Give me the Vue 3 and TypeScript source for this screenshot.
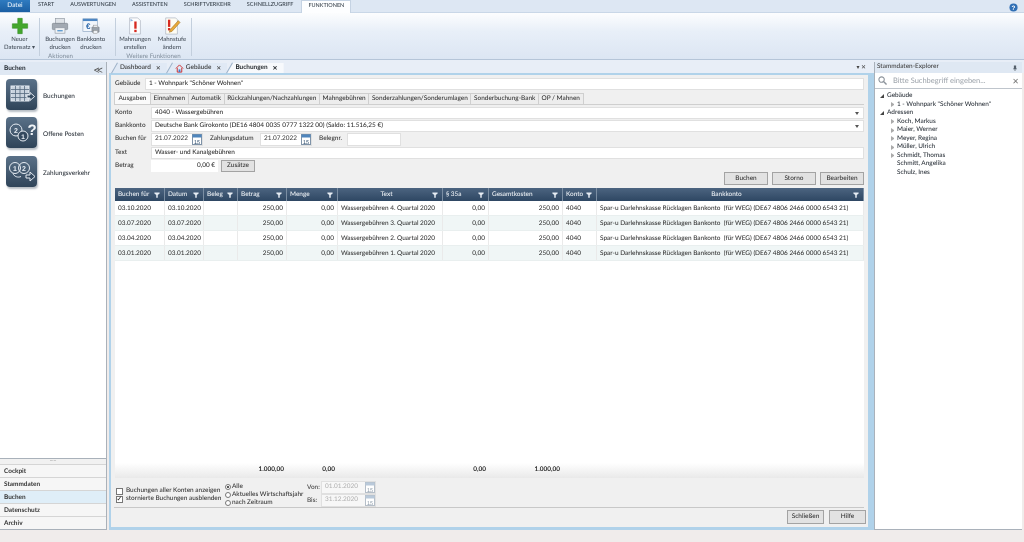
<script setup lang="ts">
const ribbonTabs = ['START', 'AUSWERTUNGEN', 'ASSISTENTEN', 'SCHRIFTVERKEHR', 'SCHNELLZUGRIFF']
const formTabs = ['Ausgaben', 'Einnahmen', 'Automatik', 'Rückzahlungen/Nachzahlungen', 'Mahngebühren', 'Sonderzahlungen/Sonderumlagen', 'Sonderbuchung-Bank', 'OP / Mahnen']
const columns = [
  { t: 'Buchen für', c: '' }, { t: 'Datum', c: '' }, { t: 'Beleg', c: '' }, { t: 'Betrag', c: '' }, { t: 'Menge', c: '' },
  { t: 'Text', c: 'center' }, { t: '§ 35a', c: '' }, { t: 'Gesamtkosten', c: '' }, { t: 'Konto', c: '' }, { t: 'Bankkonto', c: 'center' },
]
const bank = 'Spar-u Darlehnskasse Rücklagen Bankonto  (für WEG) (DE67 4806 2466 0000 6543 21)'
const rows = [
  ['03.10.2020', '4.'], ['03.07.2020', '3.'], ['03.04.2020', '2.'], ['03.01.2020', '1.'],
]
const nav = ['Cockpit', 'Stammdaten', 'Buchen', 'Datenschutz', 'Archiv']
const addresses = [
  { n: 'Koch, Markus', a: true }, { n: 'Maier, Werner', a: true }, { n: 'Meyer, Regina', a: true },
  { n: 'Müller, Ulrich', a: true }, { n: 'Schmidt, Thomas', a: true }, { n: 'Schmitt, Angelika', a: false }, { n: 'Schulz, Ines', a: false },
]
</script>

<template>
  <div class="app">
    <div class="tabbar">
      <div class="file">Datei</div>
      <div class="rtabs">
        <span v-for="t in ribbonTabs" :key="t" class="rtab">{{ t }}</span>
        <span class="rtab active">FUNKTIONEN</span>
      </div>
      <svg class="help" viewBox="0 0 10 10" width="9" height="9"><circle cx="5" cy="5" r="4.5" fill="#2f6fb5"/><text x="5" y="7.6" text-anchor="middle" font-size="7" font-weight="700" fill="#fff" font-family="Liberation Sans">?</text></svg>
    </div>

    <div class="ribbon">
      <div class="rgroup first">
        <div class="rbtn w33">
          <svg viewBox="0 0 20 20" width="18" height="18"><path d="M7.500 1.500h5v6h6v5h-6v6h-5v-6h-6v-5h6z" fill="#43a72d" stroke="#2f8a1e" stroke-width=".6"/></svg>
          <span>Neuer<br>Datensatz ▾</span>
        </div>
      </div>
      <div class="rsep"></div>
      <div class="rgroup g69">
        <div class="ritems ri1">
          <div class="rbtn w30">
            <svg viewBox="0 0 20 20" width="18" height="18"><rect x="5" y="1.500" width="10" height="6" fill="#dfe3e8" stroke="#8e96a0" stroke-width=".7"/><rect x="1.500" y="7" width="17" height="7" rx="1" fill="#a2a9b2" stroke="#6f7780" stroke-width=".6"/><rect x="4.500" y="12" width="11" height="6" fill="#eef1f4" stroke="#8e96a0" stroke-width=".7"/><rect x="7" y="14.500" width="6" height="1.500" fill="#5b9ad0"/></svg>
            <span>Buchungen<br>drucken</span>
          </div>
          <div class="rbtn w30">
            <svg viewBox="0 0 20 20" width="18" height="18"><rect x="1" y="2" width="16" height="14" fill="#f2f6fb" stroke="#8aa3bf" stroke-width=".7"/><rect x="1" y="2" width="16" height="2.500" fill="#4d86c3"/><text x="7" y="13" text-anchor="middle" font-size="9" font-weight="700" fill="#2a66aa" font-family="Liberation Sans">€</text><rect x="11" y="11" width="8" height="6" rx=".6" fill="#9aa2ab" stroke="#666e77" stroke-width=".5"/><rect x="12.500" y="9" width="5" height="2.500" fill="#e8ebee" stroke="#777" stroke-width=".4"/><rect x="12.500" y="15" width="5" height="3.500" fill="#eef1f4" stroke="#777" stroke-width=".4"/></svg>
            <span>Bankkonto<br>drucken</span>
          </div>
        </div>
        <div class="rlabel left-label">Aktionen</div>
      </div>
      <div class="rsep"></div>
      <div class="rgroup g69">
        <div class="ritems ri2">
          <div class="rbtn w32">
            <svg viewBox="0 0 20 20" width="18" height="18"><path d="M4 1h9l3 3v15H4z" fill="#fdfdfe" stroke="#a5aeba" stroke-width=".7"/><path d="M5 2l3 2-3 1z" fill="#8ab4de"/><rect x="9.200" y="5" width="2.600" height="8" fill="#d62a20"/><rect x="9.200" y="14.200" width="2.600" height="2.600" fill="#d62a20"/></svg>
            <span>Mahnungen<br>erstellen</span>
          </div>
          <div class="rbtn w32">
            <svg viewBox="0 0 20 20" width="18" height="18"><path d="M3 1h11l2 2v16H3z" fill="#fdfcf4" stroke="#a5aeba" stroke-width=".7"/><rect x="5.500" y="3" width="2.600" height="8" fill="#d62a20"/><rect x="5.500" y="12.300" width="2.600" height="2.600" fill="#d62a20"/><path d="M17 4l2 2-9 10-3 1 1-3z" fill="#e9a93a" stroke="#8a6420" stroke-width=".5"/></svg>
            <span>Mahnstufe<br>ändern</span>
          </div>
        </div>
        <div class="rlabel">Weitere Funktionen</div>
      </div>
      <div class="rsep"></div>
    </div>

    <div class="body">
      <aside class="left">
        <div class="lhead"><b>Buchen</b><span class="chev">≪</span></div>
        <div class="llist">
          <div class="litem">
            <div class="bigicon"><svg viewBox="0 0 30 30" width="30" height="30" fill="none" stroke="#dfe7f0" stroke-width="1"><rect x="4" y="7" width="18" height="15" fill="#c9d3de" stroke="#e6ecf3"/><path d="M4 10.500h18M4 14.500h18M4 18.500h18M8.500 7v15M13 7v15M17.500 7v15" stroke="#55697f" stroke-width=".8"/><path d="M20 16h3v-2.500l4.500 4-4.500 4V19h-3z" fill="#34495f" stroke="#e6ecf3"/></svg></div>
            <span>Buchungen</span>
          </div>
          <div class="litem">
            <div class="bigicon"><svg viewBox="0 0 30 30" width="30" height="30" fill="none" stroke="#e6ecf3" stroke-width="1"><circle cx="9" cy="12" r="6"/><circle cx="16" cy="18" r="5" fill="#34495f"/><text x="9" y="14.500" text-anchor="middle" font-size="7" font-weight="700" fill="#e6ecf3" stroke="none" font-family="Liberation Sans">2</text><text x="16" y="20.500" text-anchor="middle" font-size="6.500" font-weight="700" fill="#e6ecf3" stroke="none" font-family="Liberation Sans">1</text><text x="25" y="17" text-anchor="middle" font-size="15" font-weight="700" fill="#f0f4f8" stroke="none" font-family="Liberation Sans">?</text></svg></div>
            <span>Offene Posten</span>
          </div>
          <div class="litem">
            <div class="bigicon"><svg viewBox="0 0 30 30" width="30" height="30" fill="none" stroke="#e6ecf3" stroke-width="1"><circle cx="8" cy="12" r="5.500"/><circle cx="17" cy="12" r="5.500"/><text x="8" y="14.500" text-anchor="middle" font-size="7" font-weight="700" fill="#e6ecf3" stroke="none" font-family="Liberation Sans">1</text><text x="17" y="14.500" text-anchor="middle" font-size="7" font-weight="700" fill="#e6ecf3" stroke="none" font-family="Liberation Sans">2</text><path d="M6 17.500c1 3 5 4.500 8 3"/><path d="M19 19h4v-3l5 4.500-5 4.500v-3h-4z" fill="#34495f"/></svg></div>
            <span>Zahlungsverkehr</span>
          </div>
        </div>
        <div class="grip">·····</div>
        <div v-for="n in nav" :key="n" class="navitem" :class="{ on: n === 'Buchen' }">{{ n }}</div>
      </aside>

      <main class="main">
        <div class="dtabs">
          <span class="dtab">Dashboard <i>✕</i></span>
          <span class="dtab"><svg viewBox="0 0 10 10" width="9" height="9"><path d="M1 5l4-4 4 4M2.500 4.500V9h5V4.500" fill="none" stroke="#c33" stroke-width="1.100"/><rect x="4" y="6" width="2" height="3" fill="#47c"/></svg> Gebäude <i>✕</i></span>
          <span class="dtab active">Buchungen <i>✕</i></span>
          <span class="dtools">▾ ✕</span>
        </div>
        <div class="frame">
          <div class="building">
            <label>Gebäude</label>
            <div class="combo grow">1 - Wohnpark "Schöner Wohnen"</div>
          </div>
          <div class="ftabs">
            <span v-for="(t, i) in formTabs" :key="t" class="ftab" :class="{ active: i === 0 }">{{ t }}</span>
          </div>
          <div class="panel">
            <div class="frow">
              <label>Konto</label>
              <div class="combo grow caret">4040 - Wassergebühren</div>
            </div>
            <div class="frow">
              <label>Bankkonto</label>
              <div class="combo grow caret">Deutsche Bank Girokonto (DE16 4804 0035 0777 1322 00) (Saldo: 11.516,25 €)</div>
            </div>
            <div class="frow dates">
              <label>Buchen für</label>
              <div class="date">21.07.2022<svg class="cal" viewBox="0 0 10 11" width="10" height="11"><rect x=".5" y=".5" width="9" height="10" fill="#fff" stroke="#7f93a8"/><rect x=".5" y=".5" width="9" height="3" fill="#4f86bd"/><text x="5" y="9.500" text-anchor="middle" font-size="5.500" fill="#2a4a6a" font-family="Liberation Sans">15</text></svg></div>
              <span class="lbl2">Zahlungsdatum</span>
              <div class="date">21.07.2022<svg class="cal" viewBox="0 0 10 11" width="10" height="11"><rect x=".5" y=".5" width="9" height="10" fill="#fff" stroke="#7f93a8"/><rect x=".5" y=".5" width="9" height="3" fill="#4f86bd"/><text x="5" y="9.500" text-anchor="middle" font-size="5.500" fill="#2a4a6a" font-family="Liberation Sans">15</text></svg></div>
              <span class="lbl3">Belegnr.</span>
              <div class="beleg"></div>
            </div>
            <div class="frow">
              <label>Text</label>
              <div class="combo grow">Wasser- und Kanalgebühren</div>
            </div>
            <div class="frow">
              <label>Betrag</label>
              <div class="amount">0,00 €</div>
              <div class="btn zus">Zusätze</div>
            </div>
            <div class="actions">
              <div class="btn big">Buchen</div>
              <div class="btn big">Storno</div>
              <div class="btn big">Bearbeiten</div>
            </div>
            <div class="grid">
              <div class="ghead gcols">
                <div v-for="c in columns" :key="c.t" class="gh" :class="c.c">
                  <span>{{ c.t }}</span>
                  <svg class="filter" viewBox="0 0 8 8" width="6" height="6"><path d="M.5 .5h7v1.500L5 4v3.500H3V4L.5 2z" fill="#e6ecf3"/></svg>
                </div>
              </div>
              <div class="gbody">
                <div v-for="(r, i) in rows" :key="r[0]" class="grow-row gcols" :class="{ alt: i % 2 === 1 }">
                  <div>{{ r[0] }}</div>
                  <div>{{ r[0] }}</div>
                  <div></div>
                  <div class="num">250,00</div>
                  <div class="num">0,00</div>
                  <div>Wassergebühren {{ r[1] }} Quartal 2020</div>
                  <div class="num">0,00</div>
                  <div class="num">250,00</div>
                  <div>4040</div>
                  <div class="bank">{{ bank }}</div>
                </div>
              </div>
              <div class="gfoot gcols">
                <div></div><div></div><div></div>
                <div class="num">1.000,00</div>
                <div class="num">0,00</div>
                <div></div>
                <div class="num">0,00</div>
                <div class="num">1.000,00</div>
                <div></div><div></div>
              </div>
            </div>
            <div class="options">
              <div class="checks">
                <div class="chk"><span class="box"></span>Buchungen aller Konten anzeigen</div>
                <div class="chk"><span class="box">✓</span>stornierte Buchungen ausblenden</div>
              </div>
              <div class="radios">
                <div class="rad"><span class="dot on"></span>Alle</div>
                <div class="rad"><span class="dot"></span>Aktuelles Wirtschaftsjahr</div>
                <div class="rad"><span class="dot"></span>nach Zeitraum</div>
              </div>
              <div class="ranges">
                <div class="rg"><span>Von:</span><div class="date off">01.01.2020<svg class="cal" viewBox="0 0 10 11" width="10" height="11"><rect x=".5" y=".5" width="9" height="10" fill="#fff" stroke="#b5bec8"/><rect x=".5" y=".5" width="9" height="3" fill="#b9c9da"/><text x="5" y="9.500" text-anchor="middle" font-size="5.500" fill="#8c9aa8" font-family="Liberation Sans">15</text></svg></div></div>
                <div class="rg"><span>Bis:</span><div class="date off">31.12.2020<svg class="cal" viewBox="0 0 10 11" width="10" height="11"><rect x=".5" y=".5" width="9" height="10" fill="#fff" stroke="#b5bec8"/><rect x=".5" y=".5" width="9" height="3" fill="#b9c9da"/><text x="5" y="9.500" text-anchor="middle" font-size="5.500" fill="#8c9aa8" font-family="Liberation Sans">15</text></svg></div></div>
              </div>
            </div>
            <div class="bottom">
              <div class="btn foot">Schließen</div>
              <div class="btn foot">Hilfe</div>
            </div>
          </div>
        </div>
      </main>

      <aside class="right">
        <div class="rhead"><span>Stammdaten-Explorer</span><svg viewBox="0 0 8 8" width="6" height="6"><path d="M2.500 .5h3v4h1v1h-2V8h-1V5.500h-2v-1h1z" fill="#55606c"/></svg></div>
        <div class="search">
          <svg viewBox="0 0 10 10" width="9" height="9"><circle cx="4" cy="4" r="3" fill="none" stroke="#8d949c" stroke-width="1.200"/><path d="M6.500 6.500L9.500 9.500" stroke="#8d949c" stroke-width="1.600"/></svg>
          <span class="ph">Bitte Suchbegriff eingeben...</span>
          <span class="sx">✕</span>
        </div>
        <div class="tree">
          <div class="t0"><i class="open"></i>Gebäude</div>
          <div class="t1"><i class="closed"></i>1 - Wohnpark "Schöner Wohnen"</div>
          <div class="t0"><i class="open"></i>Adressen</div>
          <div v-for="a in addresses" :key="a.n" class="t1"><i :class="a.a ? 'closed' : 'none'"></i>{{ a.n }}</div>
        </div>
      </aside>
    </div>
    <div class="status"></div>
  </div>
</template>

<style>
html, body { margin: 0; padding: 0; overflow: hidden; }
</style>

<style scoped>
.app { width: 1024px; height: 542px; display: flex; flex-direction: column; font-family: Lato, "Open Sans", sans-serif; font-size: 6.450px; font-weight: 500; color: #2a2a2a; background: #f0eceb; overflow: hidden; line-height: 1; text-rendering: geometricPrecision; filter: blur(.2px); }
.tabbar { height: 13px; background: #dde7f3; display: flex; align-items: stretch; position: relative; border-bottom: 1px solid #c9d7e7; box-sizing: border-box; flex: none; }
.file { width: 30px; background: linear-gradient(#2f7bc0, #1b5fa3); color: #e8f2fb; display: flex; align-items: center; justify-content: center; font-size: 6.450px; }
.rtabs { display: flex; }
.rtab { padding: 0 8px; font-size: 5.500px; display: flex; align-items: center; color: #3a444e; }
.rtab.active { background: #fdfeff; margin-bottom: -1px; border: 1px solid #c5d3e3; border-bottom: 0; padding: 0 6px; }
.help { position: absolute; right: 6px; top: 3px; }
.ribbon { height: 47px; flex: none; display: flex; background: linear-gradient(#fcfdfe 0%, #e8eff8 40%, #dce6f3 100%); border-bottom: 1px solid #b5c5d8; box-sizing: border-box; padding-left: 3px; }
.rgroup { display: flex; flex-direction: column; margin-bottom: -4px; }
.rgroup.first { width: 33px; }
.g69 { width: 69px; }
.ritems { display: flex; flex: 1; }
.ri1 { gap: 1px; padding-left: 2px; }
.ri2 { gap: 5px; }
.rbtn { display: flex; flex-direction: column; align-items: center; text-align: center; font-size: 6px; color: #48525d; padding-top: 4px; line-height: 7.500px; white-space: nowrap; }
.rbtn svg { margin-bottom: 1px; flex: none; }
.w33 { width: 33px; }
.w30 { width: 30px; }
.w32 { width: 32px; }
.rlabel { font-size: 6.200px; color: #8794a2; height: 9px; text-align: center; white-space: nowrap; }
.left-label { text-align: left; padding-left: 5px; }
.rsep { width: 1px; margin: 5px 3px 3px; background: #c3cfdd; }
.body { height: 470px; flex: none; display: flex; background: linear-gradient(#e8eef7, #e8eef7 13px, #f0eceb 13px); box-sizing: border-box; }
.left { width: 107px; flex: none; display: flex; flex-direction: column; margin-top: 2px; border-right: 1px solid #a9b1ba; border-bottom: 1px solid #a9b1ba; box-sizing: border-box; }
.lhead { height: 13px; background: #dfe8f3; display: flex; align-items: center; justify-content: space-between; padding: 2px 3px 0 4px; box-sizing: border-box; color: #232a31; flex: none; }
.chev { font-size: 9px; color: #555; }
.llist { flex: 1; background: #fff; padding: 0 0 0 6px; border-bottom: 1px solid #a9b1ba; }
.litem { display: flex; align-items: center; gap: 6px; height: 38.500px; color: #2c333b; }
.litem span { padding-top: 5px; }
.bigicon { width: 31px; height: 31px; border-radius: 4px; background: linear-gradient(#5a7188, #2f4459); display: flex; align-items: center; justify-content: center; box-shadow: 1px 2px 2px #b8bec5; }
.grip { height: 5px; background: #f1f1f1; text-align: center; font-size: 5px; line-height: 4px; color: #aaa; flex: none; }
.navitem { height: 13px; flex: none; box-sizing: border-box; background: #f6f6f6; border-top: 1px solid #d5d5d5; padding: 1.500px 0 0 4px; font-weight: 700; display: flex; align-items: center; color: #333; }
.navitem.on { background: #dfeef8; }
.main { width: 765px; flex: none; margin-left: 2px; display: flex; flex-direction: column; }
.dtabs { height: 13px; flex: none; display: flex; align-items: flex-end; padding-left: 11px; gap: 8px; position: relative; }
.dtab { height: 10px; padding: 1px 6px 0 0; box-sizing: border-box; display: flex; align-items: center; gap: 2px; color: #333; position: relative; z-index: 0; }
.dtab::before { content: ""; position: absolute; inset: 0 0 0 -8px; background: #e0e9f5; clip-path: polygon(6px 0, 100% 0, 100% 100%, 0 100%); z-index: -1; }
.dtab::after { content: ""; position: absolute; left: -6px; top: -1px; height: 12px; width: 1px; background: #9db2c9; transform: rotate(30deg); }
.dtab i { font-style: normal; font-size: 6px; margin-left: 3px; }
.dtab.active { font-weight: 700; color: #23282d; }
.dtab.active::before { background: #f7f9fc; }
.dtools { position: absolute; right: 8px; top: 5px; font-size: 6px; color: #444; }
.frame { flex: 1; display: flex; flex-direction: column; background: #f0f0f0; border: 2px solid #b0d2ea; border-right-width: 6px; border-bottom-width: 3px; padding: 2px 4px 0 3px; min-height: 0; box-sizing: border-box; box-shadow: 0 1px 0 #9aa7b5; }
.building { display: flex; align-items: center; height: 14px; flex: none; }
.building label, .frow label { flex: none; padding: 1px 0 0 1px; box-sizing: border-box; color: #333; white-space: nowrap; }
.building label { width: 31px; }
.frow label { width: 37px; }
.combo { height: 12px; display: flex; align-items: center; background: #fff; border: 1px solid #e0e0e0; padding: 1px 0 0 3px; color: #2e2e2e; box-sizing: border-box; position: relative; }
.grow { flex: 1; }
.caret::after { content: ""; position: absolute; right: 4px; top: 4px; border: 2.500px solid transparent; border-top: 3px solid #555; }
.ftabs { display: flex; height: 12px; margin-top: 1px; flex: none; align-items: flex-end; }
.ftab { height: 11px; display: flex; align-items: center; padding: 1px 2.600px 0; border: 1px solid #cfcfcf; border-bottom: 0; margin-left: -1px; background: #ededed; color: #333; box-sizing: border-box; white-space: nowrap; }
.ftab.active { height: 12px; background: #fafafa; margin-left: 0; position: relative; z-index: 1; padding: 1px 3.500px 0; }
.panel { flex: 1; display: flex; flex-direction: column; border-top: 1px solid #cfcfcf; min-height: 0; padding-top: 1px; }
.frow { display: flex; align-items: center; height: 13px; flex: none; }
.dates { height: 14px; }
.date { width: 52px; height: 13px; background: #fff; border: 1px solid #e0e0e0; box-sizing: border-box; display: flex; align-items: center; justify-content: space-between; padding: 0 0 0 3px; color: #444; }
.date.off { color: #b3b3b3; width: 55px; background: #f7f7f7; }
.lbl2 { margin-left: 7px; width: 50px; color: #333; padding-top: 1px; }
.lbl3 { margin-left: 7px; width: 28px; color: #333; padding-top: 1px; }
.beleg { width: 54px; height: 13px; background: #fff; border: 1px solid #e0e0e0; box-sizing: border-box; }
.amount { width: 67px; height: 12px; background: #fff; display: flex; align-items: center; justify-content: flex-end; padding: 1px 3px 0 0; box-sizing: border-box; color: #2e2e2e; }
.btn { display: flex; align-items: center; justify-content: center; background: #e2e2e2; border: 1px solid #a3a3a3; box-sizing: border-box; color: #333; padding-top: 1px; }
.zus { width: 34px; height: 12px; margin-left: 3px; }
.actions { display: flex; justify-content: flex-end; gap: 4px; height: 16px; align-items: flex-start; flex: none; }
.big { width: 44px; height: 13px; }
.grid { flex: 1; display: flex; flex-direction: column; margin-left: 1px; min-height: 0; }
.gcols { display: grid; grid-template-columns: 50px 39px 34px 49px 51px 105px 46px 74px 34px 1fr; }
.ghead { height: 13px; background: linear-gradient(#4c6480, #2e4763); color: #eef2f6; flex: none; }
.gh { display: flex; align-items: center; justify-content: space-between; padding: 1.500px 4px 0 3px; border-right: 1px solid #7b8ea3; position: relative; }
.gh.center span { flex: 1; text-align: center; }
.gbody { flex: 1; background: #fff; }
.grow-row { height: 15px; align-items: center; border-bottom: 1px solid #e9efef; box-sizing: border-box; color: #333; }
.grow-row > div { height: 100%; display: flex; align-items: center; padding: 2px 3px 0; border-right: 1px solid #eaeaea; box-sizing: border-box; white-space: pre; overflow: hidden; }
.grow-row.alt { background: #f0f6f6; }
.grow-row .num { justify-content: flex-end; }
.gfoot { height: 15px; flex: none; background: linear-gradient(#fff, #e9e9e9); font-weight: 700; align-items: center; color: #2a2a2a; }
.gfoot .num { text-align: right; padding-right: 3px; }
.options { display: flex; height: 30px; flex: none; padding-left: 2px; border-bottom: 1px solid #c8c8c8; align-items: flex-start; box-sizing: border-box; }
.checks { width: 109px; padding-top: 9px; display: flex; flex-direction: column; }
.chk { display: flex; align-items: center; height: 8px; color: #333; white-space: nowrap; }
.box { width: 7px; height: 7px; border: 1px solid #777; background: #fff; margin-right: 3px; font-size: 7px; display: flex; align-items: center; justify-content: center; color: #222; flex: none; box-sizing: border-box; }
.radios { width: 82px; padding-top: 5px; }
.rad { display: flex; align-items: center; height: 8px; white-space: nowrap; color: #333; }
.dot { width: 6px; height: 6px; border: 1px solid #777; border-radius: 50%; background: #fff; margin-right: 1px; flex: none; position: relative; box-sizing: border-box; }
.dot.on::after { content: ""; position: absolute; left: 1px; top: 1px; width: 2px; height: 2px; background: #222; border-radius: 50%; }
.ranges { display: flex; flex-direction: column; padding-top: 3px; }
.rg { display: flex; align-items: center; gap: 4px; color: #444; }
.rg span { width: 10px; padding-top: 1px; }
.bottom { display: flex; justify-content: flex-end; gap: 5px; padding: 2px 0 0 0; height: 19px; flex: none; box-sizing: border-box; margin-right: -2px; }
.foot { width: 37px; height: 14px; }
.right { flex: none; width: 148px; margin-top: 2px; display: flex; flex-direction: column; border-left: 1px solid #a9b1ba; border-bottom: 1px solid #a9b1ba; background: #fff; box-sizing: border-box; }
.rhead { height: 11px; background: #dfe8f3; display: flex; align-items: center; justify-content: space-between; padding: 0 4px 0 2px; color: #444; flex: none; }
.search { height: 15px; flex: none; display: flex; align-items: center; padding: 0 3px; border-bottom: 1px solid #bfc5cc; color: #a3a9b0; }
.ph { margin-left: 6px; flex: 1; font-size: 7.500px; }
.sx { font-size: 8px; color: #777; }
.tree { padding-top: 3px; color: #2c333b; }
.t0, .t1 { height: 8.500px; display: flex; align-items: center; white-space: nowrap; }
.t0 { padding-left: 5px; }
.t1 { padding-left: 16px; }
.tree i { width: 3px; margin-right: 3px; height: 5px; display: block; box-sizing: border-box; flex: none; }
.t0 i { margin-right: 3px; width: 4px; height: 4px; }
.open { border-style: solid; border-width: 0 0 4px 4px; border-color: transparent transparent #444 transparent; }
.closed { border-style: solid; border-width: 2.500px 0 2.500px 3px; border-color: transparent transparent transparent #aaa; }
.status { flex: 1; background: #f0eceb; }
</style>
